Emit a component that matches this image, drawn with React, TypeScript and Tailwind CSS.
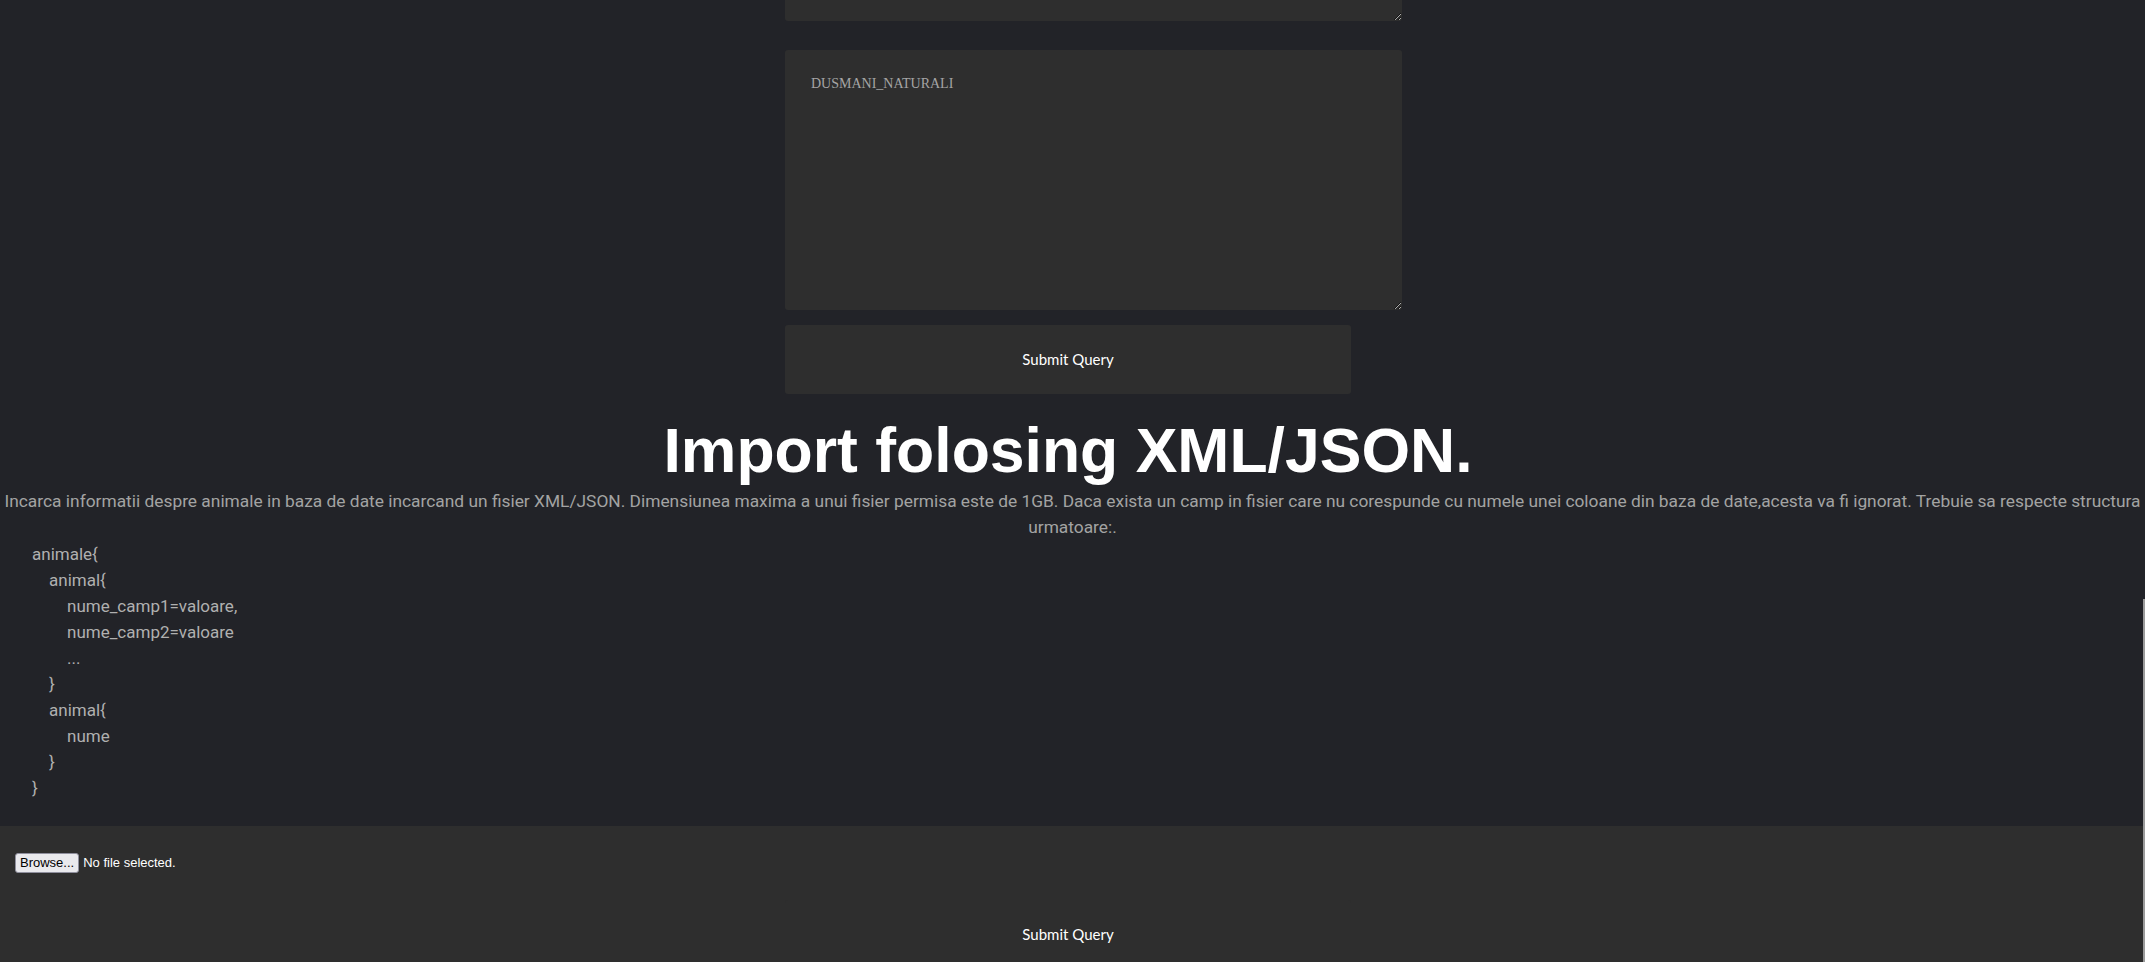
import React from "react";

const codeLines: { text: string; level: number }[] = [
  { text: "animale{", level: 0 },
  { text: "animal{", level: 1 },
  { text: "nume_camp1=valoare,", level: 2 },
  { text: "nume_camp2=valoare", level: 2 },
  { text: "...", level: 2 },
  { text: "}", level: 1 },
  { text: "animal{", level: 1 },
  { text: "nume", level: 2 },
  { text: "}", level: 1 },
  { text: "}", level: 0 },
];

const indent = ["pl-0", "pl-[17px]", "pl-[35px]"];

export default function App() {
  return (
    <div className="min-h-[962px] overflow-hidden bg-[#222328] font-['Roboto',sans-serif]">
      {/* query form (scrolled, top textarea cut off) */}
      <div className="flex justify-center pr-[9px]">
        <form className="flex w-[566px] flex-col">
          <textarea
            className="-mt-[239px] h-[260px] w-[617px] rounded-[3px] bg-[#2e2e2e] px-[26px] py-[23px] font-['Liberation_Serif',serif] text-[14px] text-[#aaaaaa] outline-none placeholder:text-[#a5a5a5]"
            placeholder="DENUMIRE"
          />
          <textarea
            className="mt-[29px] h-[260px] w-[617px] rounded-[3px] bg-[#2e2e2e] px-[26px] py-[23px] font-['Liberation_Serif',serif] text-[14px] text-[#aaaaaa] outline-none placeholder:text-[#a5a5a5]"
            placeholder="DUSMANI_NATURALI"
          />
          <button
            type="button"
            className="mt-[15px] h-[69px] w-[566px] rounded-[3px] bg-[#2e2e2e] font-['Lato',sans-serif] text-[15px] text-white"
          >
            Submit Query
          </button>
        </form>
      </div>

      <h1 className="mt-[19px] pr-[9px] text-center font-['Liberation_Sans',Arial,sans-serif] text-[62.5px] font-bold leading-[75px] text-white">
        Import folosing XML/JSON.
      </h1>
      <p className="-mx-[10px] text-center text-[17.35px] leading-[26px] text-[#a3a3a3]">
        Incarca informatii despre animale in baza de date incarcand un fisier XML/JSON. Dimensiunea maxima a unui fisier permisa este de 1GB. Daca exista un camp in fisier care nu corespunde cu numele unei coloane din baza de date,acesta va fi ignorat. Trebuie sa respecte structura urmatoare:.
      </p>

      <div className="mt-[1px] pl-[32px] text-[17px] leading-[26px] text-[#b0b0b0]">
        {codeLines.map((l, i) => (
          <div key={i} className={indent[l.level]}>
            {l.text}
          </div>
        ))}
      </div>

      {/* import form */}
      <form className="mt-[25px] bg-[#2e2e2e] pt-[27px]">
        <div className="flex items-center gap-[4px] pl-[15px] font-['Liberation_Sans',Arial,sans-serif] text-[13px]">
          <span className="flex h-[20px] items-center rounded-[3px] border border-[#8f8f9d] bg-[#e9e9ed] px-[4px] text-black">
            Browse...
          </span>
          <span className="text-white">No file selected.</span>
        </div>
        <div className="flex justify-center pr-[9px] pt-[27px]">
          <button
            type="button"
            className="h-[69px] w-[566px] rounded-[3px] bg-[#2e2e2e] font-['Lato',sans-serif] text-[15px] text-white"
          >
            Submit Query
          </button>
        </div>
      </form>

      {/* scrollbar thumb at the right edge */}
      <div className="fixed right-0 top-[599px] bottom-0 w-[2px] bg-[#9b9b9b]" />
    </div>
  );
}
